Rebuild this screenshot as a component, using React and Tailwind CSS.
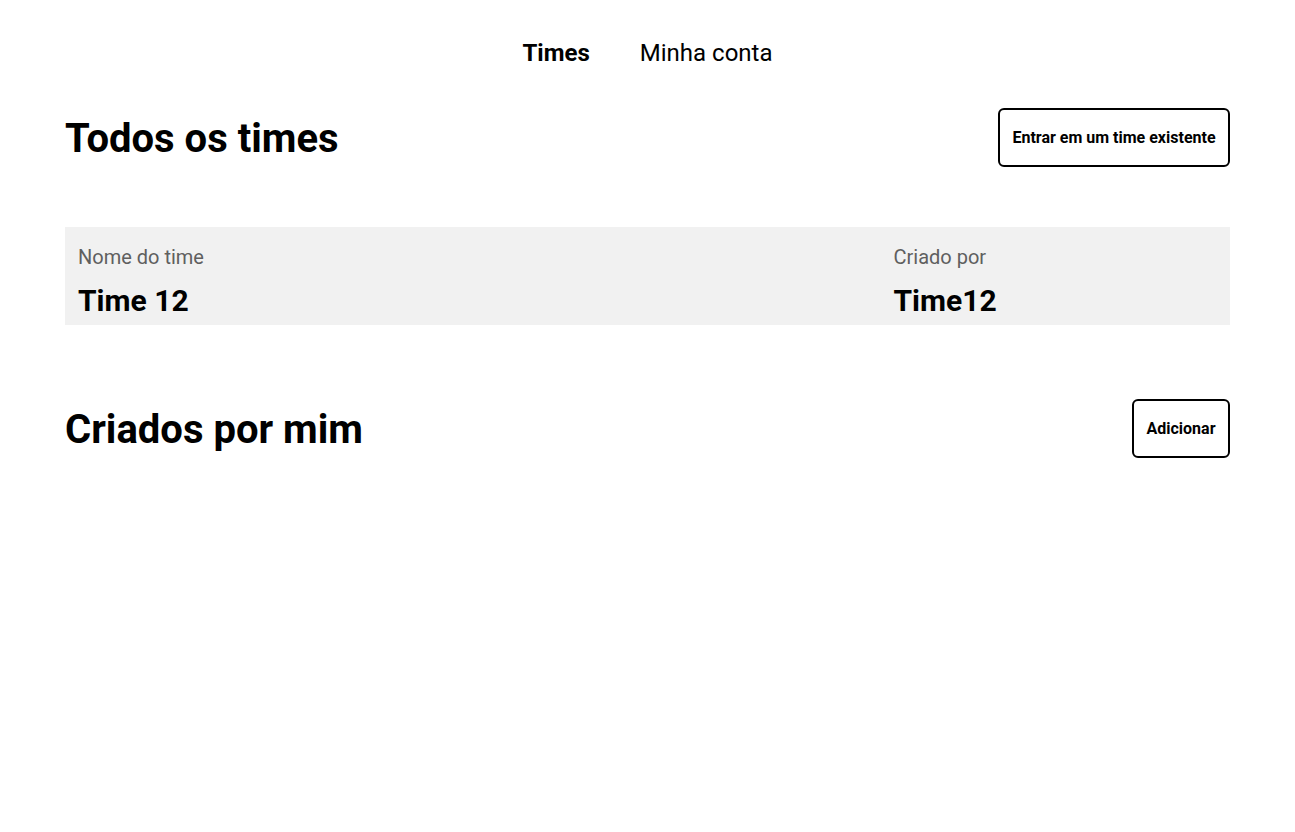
import React from 'react';

const teams = [{ id: 1, name: 'Time 12', owner: 'Time12' }];

export default function App() {
  return (
    <div className="min-h-screen bg-white text-black font-['Roboto',sans-serif]">
      <nav className="flex justify-center gap-[50px] pt-[39px] text-[24px] leading-[28px]">
        <a className="font-bold">Times</a>
        <a>Minha conta</a>
      </nav>

      <main className="w-[1165px] mx-auto">
        <section className="mt-[41px]">
          <div className="flex items-center justify-between h-[59px]">
            <h1 className="text-[40px] font-bold leading-none pt-[2px]">Todos os times</h1>
            <button className="h-[59px] w-[232px] border-2 border-black rounded-[6px] text-[16px] font-bold whitespace-nowrap">
              Entrar em um time existente
            </button>
          </div>

          <div className="mt-[60px]">
            {teams.map((team) => (
              <div key={team.id} className="grid grid-cols-[70%_30%] bg-[#f1f1f1] h-[98px]">
                <div className="px-[13px] pt-[16px]">
                  <p className="text-[20px] leading-[28px] text-[#5f5f5f]">Nome do time</p>
                  <p className="text-[30px] leading-[36px] font-bold mt-[12px]">{team.name}</p>
                </div>
                <div className="px-[13px] pt-[16px]">
                  <p className="text-[20px] leading-[28px] text-[#5f5f5f]">Criado por</p>
                  <p className="text-[30px] leading-[36px] font-bold mt-[12px]">{team.owner}</p>
                </div>
              </div>
            ))}
          </div>
        </section>

        <section className="mt-[74px]">
          <div className="flex items-center justify-between h-[59px]">
            <h1 className="text-[40px] font-bold leading-none pt-[2px]">Criados por mim</h1>
            <button className="h-[59px] w-[98px] border-2 border-black rounded-[6px] text-[16px] font-bold">
              Adicionar
            </button>
          </div>
        </section>
      </main>
    </div>
  );
}
